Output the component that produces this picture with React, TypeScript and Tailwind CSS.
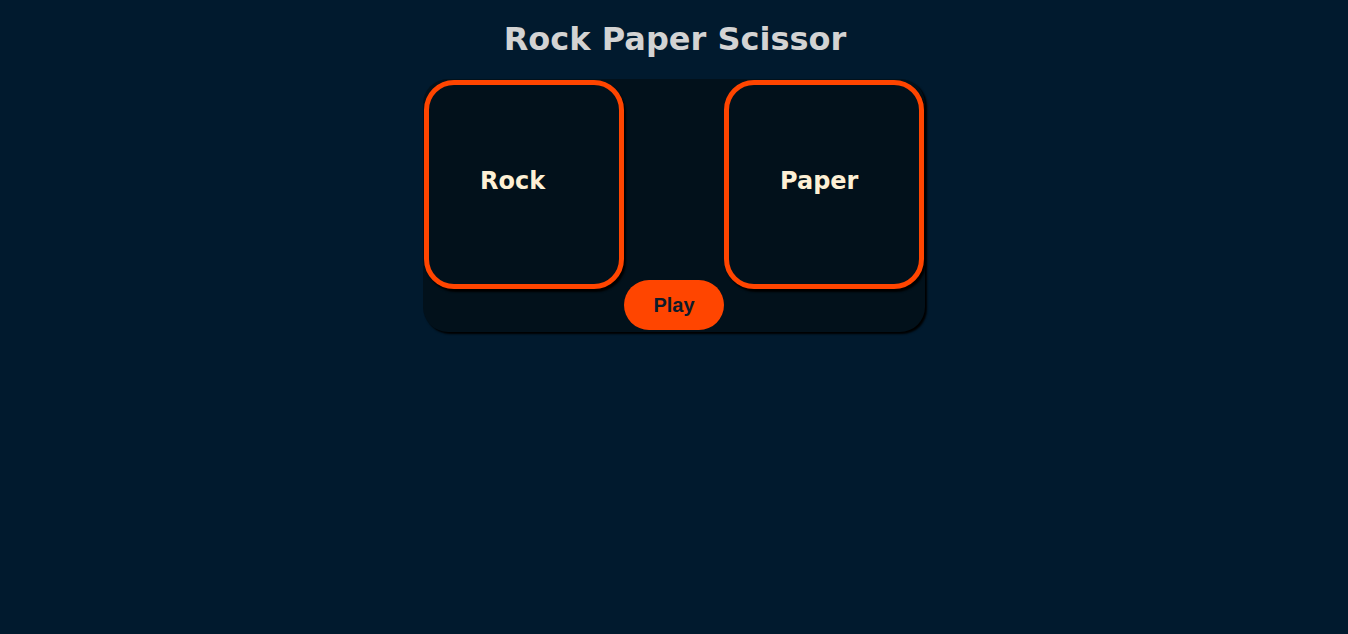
import React from 'react';

const Choice: React.FC<{ label: string }> = ({ label }) => (
  <div className="w-[200px] h-[209px] shrink-0 rounded-[30px] border-[5px] border-[#ff4500] bg-[#02111b] shadow-[2px_3px_2px_#000] pt-[82px] pl-[51px]">
    <span className="text-[24px] leading-[28px] font-bold text-[#fdf0d5]">{label}</span>
  </div>
);

const App: React.FC = () => {
  return (
    <div className="min-h-screen bg-[#011a2e] flex flex-col items-center font-['DejaVu_Sans',Verdana,sans-serif]">
      <h1 className="mt-[21px] mb-[21px] pl-[2px] text-[32px] leading-[37px] font-bold text-[#d3d3d3]">
        Rock Paper Scissor
      </h1>

      <div className="w-[502px] rounded-[25px] bg-[#02111b] shadow-[2px_2px_2px_#000] pt-[1px] flex flex-col items-center">
        <div className="w-full flex gap-[100px] pl-[1px]">
          <Choice label="Rock" />
          <Choice label="Paper" />
        </div>
        <button className="-mt-[9px] mb-[2px] w-[100px] h-[50px] rounded-full bg-[#ff4500] text-[#0d1b2a] text-[20px] font-bold font-['Liberation_Sans',Arial,sans-serif]">
          Play
        </button>
      </div>
    </div>
  );
};

export default App;
